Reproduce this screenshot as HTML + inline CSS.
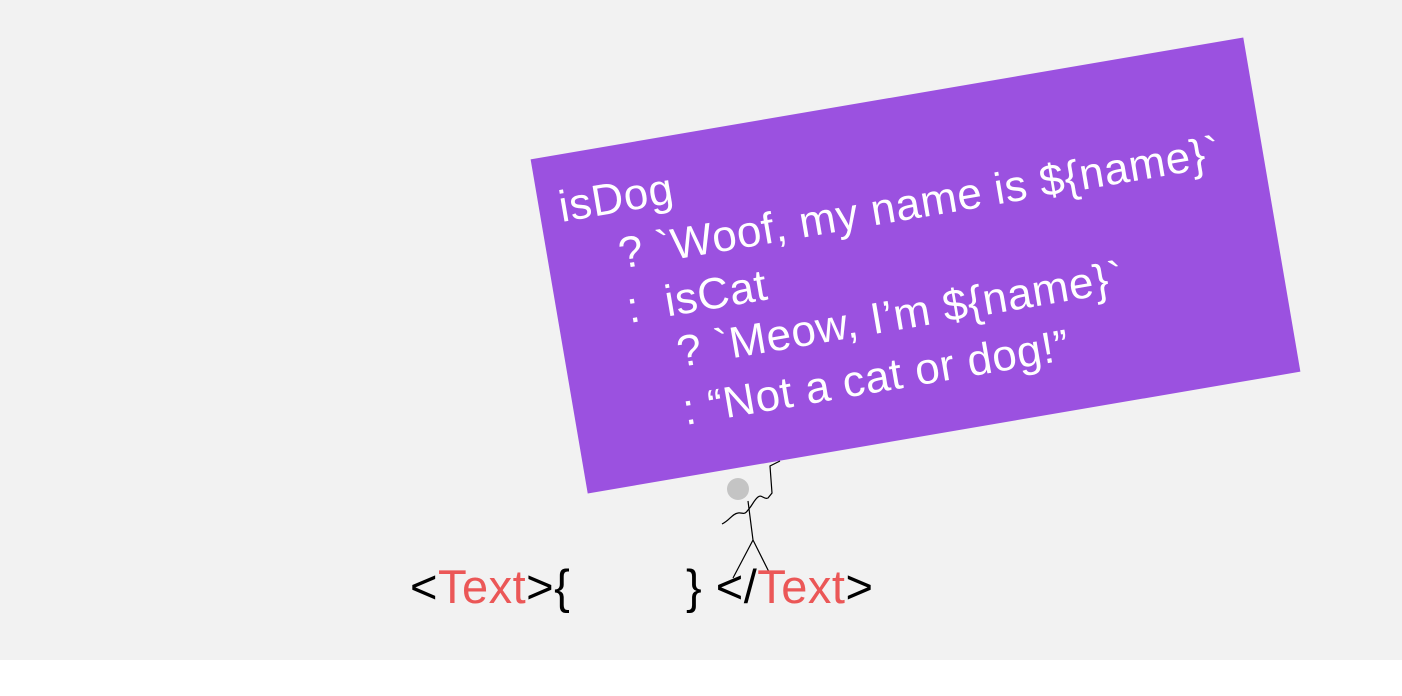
<!DOCTYPE html>
<html><head><meta charset="utf-8"><style>
html,body{margin:0;padding:0;width:1402px;height:696px;background:#fff;overflow:hidden;font-family:"Liberation Sans",sans-serif}
#bg{position:absolute;left:0;top:0;width:1402px;height:660px;background:#f2f2f2}
#card{position:absolute;left:553.5px;top:96px;width:723px;height:339px;background:#9b51e0;transform:rotate(-9.7deg);transform-origin:center}
.l{position:absolute;color:#fff;font-size:44px;white-space:pre;line-height:1;letter-spacing:0.6px}
#code{position:absolute;left:0;top:559px;width:1402px;font-size:47px;letter-spacing:0.5px}
#code span{position:absolute;top:0;white-space:pre}
.r{color:#eb5757}
</style></head><body>
<div id="bg"></div>
<div id="card">
<div class="l" style="left:20px;top:31px">isDog</div>
<div class="l" style="left:71px;top:87px">? `Woof, my name is ${name}`</div>
<div class="l" style="left:70px;top:142px">:  isCat</div>
<div class="l" style="left:112px;top:194px">? `Meow, I’m ${name}`</div>
<div class="l" style="left:108px;top:252px">: “Not a cat or dog!”</div>
</div>
<svg width="1402" height="696" style="position:absolute;left:0;top:0">
<circle cx="738" cy="489" r="11" fill="#c4c4c4"/>
<g fill="none" stroke="#000" stroke-width="1.2">
<path d="M748 501 L753 540 L733 578 M753 540 L773 580"/>
<path d="M722 524 C730 520 732 514 738 513 C742 512 744 516 748 510 C752 506 754 500 758 497 C762 494 764 500 768 498 L772 493 L770 466 L780 461"/>
</g>
</svg>
<div id="code">
<span style="left:410px">&lt;<span class="r" style="position:static">Text</span>&gt;{</span>
<span style="left:686px">} &lt;/<span class="r" style="position:static">Text</span>&gt;</span>
</div>
</body></html>
